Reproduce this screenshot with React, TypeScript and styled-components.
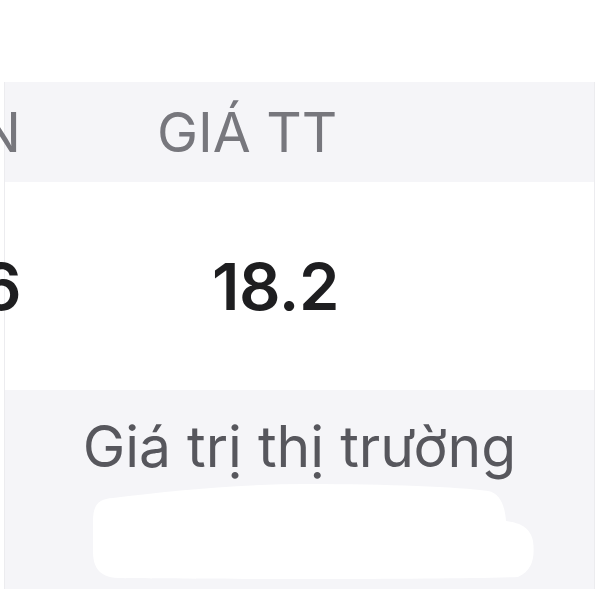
import React from "react";
import styled, { createGlobalStyle } from "styled-components";

const Global = createGlobalStyle`
  html, body { margin: 0; padding: 0; background: #ffffff; }
  body { font-family: Inter, "Noto Sans", "Liberation Sans", sans-serif; }
`;

const Page = styled.div`
  width: 600px;
  height: 600px;
  overflow: hidden;
  background: #ffffff;
  padding-top: 82px;
  box-sizing: border-box;
`;

const Table = styled.div`
  margin: 0 5px 0 4px;
  border-left: 1px solid #ececef;
  border-right: 1px solid #ececef;
  display: flex;
  flex-direction: column;
`;

const HeaderRow = styled.div`
  display: grid;
  grid-template-columns: 16px 1fr;
  align-items: center;
  height: 100px;
  background: #f5f5f8;
`;

const ValueRow = styled.div`
  display: grid;
  grid-template-columns: 16px 1fr;
  align-items: center;
  height: 208px;
  background: #ffffff;
`;

const Cell = styled.div<{ $pad?: number }>`
  display: flex;
  justify-content: ${(p) => (p.$pad === undefined ? "flex-end" : "flex-start")};
  padding-left: ${(p) => p.$pad ?? 0}px;
  white-space: nowrap;
  min-width: 0;
`;

const HeadText = styled.span`
  font-size: 55px;
  font-weight: 400;
  color: #77777d;
  line-height: 1;
`;

const ValueText = styled.span`
  font-size: 65px;
  font-weight: 600;
  color: #1e1e20;
  line-height: 1;
  letter-spacing: -0.5px;
`;

const Footer = styled.div`
  height: 199px;
  background: #f5f5f8;
  display: flex;
  flex-direction: column;
  align-items: center;
  padding-top: 28px;
  box-sizing: border-box;
`;

const FooterText = styled.div`
  font-size: 57px;
  font-weight: 400;
  color: #57575d;
  line-height: 1;
  white-space: nowrap;
`;

const Blot = styled.svg`
  display: block;
  align-self: flex-start;
  margin-left: 83px;
  margin-top: 6px;
`;

export default function App() {
  return (
    <>
      <Global />
      <Page>
        <Table>
          <HeaderRow>
            <Cell>
              <HeadText>N</HeadText>
            </Cell>
            <Cell $pad={136}>
              <HeadText>GIÁ TT</HeadText>
            </Cell>
          </HeaderRow>
          <ValueRow>
            <Cell>
              <ValueText>6</ValueText>
            </Cell>
            <Cell $pad={191}>
              <ValueText>18.2</ValueText>
            </Cell>
          </ValueRow>
          <Footer>
            <FooterText>Giá trị thị trường</FooterText>
            <Blot width="450" height="100" viewBox="0 0 450 100">
              <path
                d="M 5 40 C 5 22, 12 18, 25 17 C 80 10, 150 3, 220 3 C 300 3, 370 6, 400 10 C 412 12, 417 25, 418 40 C 430 42, 442 45, 445 60 C 447 75, 445 90, 430 96 C 350 99, 100 98, 30 97 C 10 96, 5 85, 5 70 Z"
                fill="#ffffff"
              />
            </Blot>
          </Footer>
        </Table>
      </Page>
    </>
  );
}
